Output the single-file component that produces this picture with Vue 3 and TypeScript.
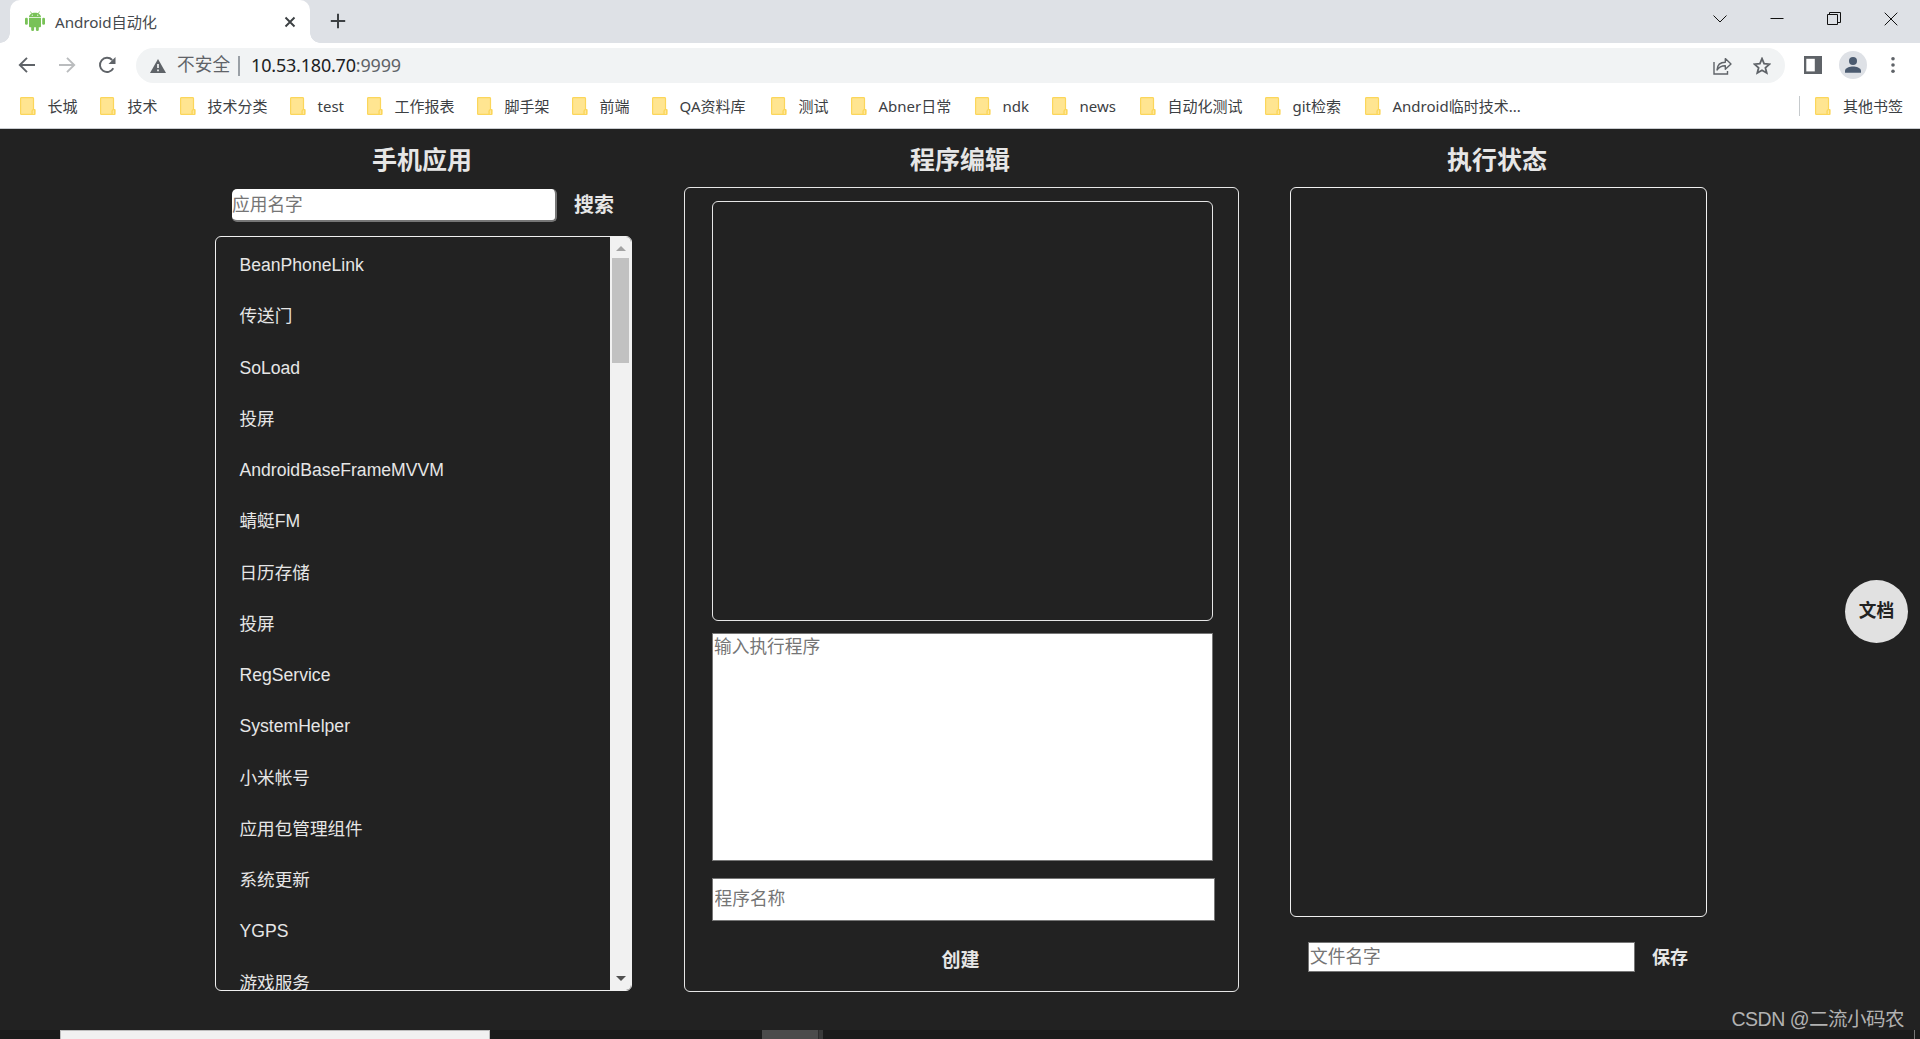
<script setup lang="ts">
interface Bookmark {
  name: string
  width: number
}

const bookmarks: Bookmark[] = [
  { name: '长城', width: 80 },
  { name: '技术', width: 80 },
  { name: '技术分类', width: 110 },
  { name: 'test', width: 77 },
  { name: '工作报表', width: 110 },
  { name: '脚手架', width: 95 },
  { name: '前端', width: 80 },
  { name: 'QA资料库', width: 119 },
  { name: '测试', width: 80 },
  { name: 'Abner日常', width: 124 },
  { name: 'ndk', width: 77 },
  { name: 'news', width: 88 },
  { name: '自动化测试', width: 125 },
  { name: 'git检索', width: 100 },
  { name: 'Android临时技术...', width: 180 },
]

const apps: string[] = [
  'BeanPhoneLink', '传送门', 'SoLoad', '投屏', 'AndroidBaseFrameMVVM',
  '蜻蜓FM', '日历存储', '投屏', 'RegService', 'SystemHelper',
  '小米帐号', '应用包管理组件', '系统更新', 'YGPS', '游戏服务',
]
</script>

<template>
  <div class="screen">
    <div class="tabstrip">
      <div class="tab">
        <svg class="android" width="20" height="20" viewBox="0 0 20 20" fill="#78c257">
          <path d="M4 6.2C4 3.6 6.500 1.700 10 1.700s6 1.900 6 4.500z" />
          <path d="M6.700 2.700L5.500.5M13.300 2.700L14.500.5" stroke="#78c257" stroke-width=".8" />
          <path d="M4 7h12v8.200a1 1 0 0 1-1 1H5a1 1 0 0 1-1-1z" />
          <rect x="0" y="6.800" width="2.800" height="7" rx="1.300" />
          <rect x="17.200" y="6.800" width="2.800" height="7" rx="1.300" />
          <rect x="6.200" y="14" width="2.900" height="6" rx="1.300" />
          <rect x="10.900" y="14" width="2.900" height="6" rx="1.300" />
          <circle cx="7.300" cy="4.200" r=".6" fill="#fff" />
          <circle cx="12.700" cy="4.200" r=".6" fill="#fff" />
        </svg>
        <span class="tab-title">Android自动化</span>
        <svg class="tab-close" width="12" height="12" viewBox="0 0 12 12"><path d="M1.500 1.500l9 9M10.500 1.500l-9 9" stroke="#3c4043" stroke-width="1.900" /></svg>
      </div>
      <svg class="plus" width="16" height="16" viewBox="0 0 16 16"><path d="M8 .8v14.400M.8 8h14.400" stroke="#3c4043" stroke-width="2" /></svg>
      <div class="window-buttons">
        <svg width="14" height="14" viewBox="0 0 14 14"><path d="M.5 3.500L7 10l6.500-6.500" /></svg>
        <svg width="14" height="14" viewBox="0 0 14 14"><path d="M.5 6.500h13" /></svg>
        <svg width="14" height="14" viewBox="0 0 14 14"><path d="M.5 2.500h10v10H.5zM2.500 2.500v-2h11v10h-3" /></svg>
        <svg width="14" height="14" viewBox="0 0 14 14"><path d="M.7.7l12.600 12.600M13.300.7L.7 13.300" /></svg>
      </div>
    </div>

    <div class="toolbar">
      <svg class="nav" width="18" height="18" viewBox="0 0 18 18"><path d="M17 9H2M9 1.800L1.800 9 9 16.200" stroke="#5f6368" /></svg>
      <svg class="nav" width="18" height="18" viewBox="0 0 18 18"><path d="M1 9h15M9 1.800L16.200 9 9 16.200" stroke="#babcbe" /></svg>
      <svg class="nav" width="18" height="18" viewBox="0 0 18 18"><path d="M15.300 12.300A7.100 7.100 0 1 1 14.200 4" stroke="#5f6368" /><path d="M17.500 1v7h-7z" fill="#5f6368" /></svg>
      <div class="omnibox">
        <svg class="warn" width="16" height="14" viewBox="0 0 16 14"><path d="M8 0l8 14H0z" fill="#5f6368" /><path d="M8 5v4M8 10.400v1.800" stroke="#f1f3f4" stroke-width="1.700" /></svg>
        <span class="insecure">不安全</span>
        <span class="omni-divider"></span>
        <span class="url">10.53.180.70<span class="port">:9999</span></span>
        <svg class="share" width="19" height="18" viewBox="0 0 19 18" fill="none" stroke="#5f6368" stroke-width="1.400"><path d="M1 5v12h13.500v-3" /><path d="M4 13c.3-5 3.500-7.800 8.300-7.800V1.600L18 7l-5.700 5.300V8.700C8.500 8.600 6 10 4 13z" stroke-linejoin="round" /></svg>
        <svg class="star" width="18" height="18" viewBox="0 0 18 18"><path d="M9 1.700l2.100 5 5.400.5-4.100 3.500 1.300 5.300L9 13.200 4.300 16l1.300-5.300-4.100-3.500 5.400-.5z" fill="none" stroke="#5f6368" stroke-width="1.800" /></svg>
      </div>
      <svg class="panel-icon" width="18" height="18" viewBox="0 0 18 18"><path d="M0 0h18v18H0z" fill="#5f6368" /><path d="M2.300 2.800h8.500v12.600H2.300z" fill="#fff" /></svg>
      <svg class="avatar" width="28" height="28" viewBox="0 0 28 28"><circle cx="14" cy="14" r="14" fill="#dee1e6" /><circle cx="14" cy="10" r="4" fill="#4b5b70" /><path d="M6 21.700v-1.900c0-2.800 5-4.200 8-4.200s8 1.400 8 4.200v1.900z" fill="#4b5b70" /></svg>
      <svg class="dots" width="4" height="18" viewBox="0 0 4 18" fill="#5f6368"><circle cx="2" cy="2.800" r="1.800" /><circle cx="2" cy="9" r="1.800" /><circle cx="2" cy="15.200" r="1.800" /></svg>
    </div>

    <div class="bookmarks">
      <div v-for="mark in bookmarks" :key="mark.name" class="bookmark" :style="{ width: mark.width + 'px' }">
        <svg class="folder" width="16" height="18" viewBox="0 0 16 18"><path d="M1.500 0h11A1.500 1.500 0 0 1 14 1.500V18H1.500A1.500 1.500 0 0 1 0 16.500v-15A1.500 1.500 0 0 1 1.500 0z" fill="#ffe591" /><path d="M.6 17V1.500q0-.9 1-.9h11q.9 0 .9.900V12M.6 17.400h12" fill="none" stroke="#fbd65b" stroke-width="1.200" /><path d="M12 18q-.6 0-.6-.8v-3q0-1.800 1.800-2.200h1.600q.8.200.8 1v4q0 1-1 1z" fill="#fbd65b" /><path d="M12.800 17v-2.500q0-1.200 1.200-1.400V17z" fill="#ffe79c" /></svg>
        <span>{{ mark.name }}</span>
      </div>
      <div class="other">
        <svg class="folder" width="16" height="18" viewBox="0 0 16 18"><path d="M1.500 0h11A1.500 1.500 0 0 1 14 1.500V18H1.500A1.500 1.500 0 0 1 0 16.500v-15A1.500 1.500 0 0 1 1.500 0z" fill="#ffe591" /><path d="M.6 17V1.500q0-.9 1-.9h11q.9 0 .9.900V12M.6 17.400h12" fill="none" stroke="#fbd65b" stroke-width="1.200" /><path d="M12 18q-.6 0-.6-.8v-3q0-1.800 1.800-2.200h1.600q.8.200.8 1v4q0 1-1 1z" fill="#fbd65b" /><path d="M12.800 17v-2.500q0-1.200 1.200-1.400V17z" fill="#ffe79c" /></svg>
        <span>其他书签</span>
      </div>
    </div>

    <main class="page">
      <section class="column side">
        <h2 class="shift">手机应用</h2>
        <div class="search">
          <input class="search-input" type="text" placeholder="应用名字" />
          <button class="search-button">搜索</button>
        </div>
        <div class="app-list">
          <ul>
            <li v-for="(app, i) in apps" :key="i">{{ app }}</li>
          </ul>
          <div class="scrollbar">
            <span class="arrow up"></span>
            <span class="thumb"></span>
            <span class="arrow down"></span>
          </div>
        </div>
      </section>

      <section class="column editor">
        <h2 class="shift">程序编辑</h2>
        <div class="editor-box">
          <div class="preview"></div>
          <textarea class="program" placeholder="输入执行程序"></textarea>
          <input class="program-name" type="text" placeholder="程序名称" />
          <button class="create">创建</button>
        </div>
      </section>

      <section class="column side">
        <h2 class="shift">执行状态</h2>
        <div class="status"></div>
        <div class="save-row">
          <input class="file-name" type="text" placeholder="文件名字" />
          <button class="save">保存</button>
        </div>
      </section>
    </main>

    <footer class="taskbar">
      <span class="task-search"></span>
      <span class="task-active"></span>
      <span class="task-edge"></span>
      <span class="clock">14:24</span>
      <span class="desktop-edge"></span>
    </footer>

    <div class="doc">文档</div>
    <div class="watermark">CSDN @二流小码农</div>
  </div>
</template>

<style>
body { margin: 0; background: #222; overflow: hidden; }
</style>

<style scoped>
* { box-sizing: border-box; }
.screen {
  position: relative; width: 1920px; height: 1039px; overflow: hidden;
  display: flex; flex-direction: column; background: #222;
  font-family: "Noto Sans", "Noto Sans CJK SC", sans-serif;
}
svg { display: block; flex: none; }
span { white-space: nowrap; }

.tabstrip { height: 43px; flex: none; display: flex; background: #dee1e6; }
.tab {
  position: relative; width: 300px; margin-left: 10px; height: 43px; background: #fff;
  border-radius: 10px 10px 0 0; display: flex; align-items: center;
}
.tab::before, .tab::after { content: ""; position: absolute; bottom: 0; width: 10px; height: 10px; }
.tab::before { left: -10px; background: radial-gradient(circle at 0 0, transparent 9.500px, #fff 10px); }
.tab::after { right: -10px; background: radial-gradient(circle at 100% 0, transparent 9.500px, #fff 10px); }
.android { margin: -1px 0 0 15px; }
.tab-title { width: 220px; margin-left: 10px; margin-top: -1px; font-size: 15.200px; letter-spacing: -.05px; color: #45494d; }
.tab-close { margin-left: 9px; }
.plus { margin: 13px 0 0 20px; }
.window-buttons { margin: 12px 22px 0 auto; display: flex; gap: 43px; }
.window-buttons svg { fill: none; stroke: #111; stroke-width: 1; }

.toolbar { height: 45px; flex: none; display: flex; align-items: center; padding: 0 0 1px 18px; background: #fff; }
.nav { margin-right: 22px; fill: none; stroke-width: 1.900; }
.omnibox {
  width: 1649px; height: 35px; margin-left: -2px; margin-top: 1px; border-radius: 18px; background: #f1f3f4;
  display: flex; align-items: center; font-size: 18px;
}
.warn { margin-left: 14px; }
.insecure { margin-left: 11px; margin-top: -2px; color: #5f6368; font-size: 17.700px; line-height: 35px; }
.omni-divider { width: 2px; height: 20px; margin-left: 8px; background: #9aa0a6; }
.url { margin-left: 11px; margin-top: -2px; color: #202124; letter-spacing: -.2px; }
.port { color: #5f6368; }
.share { margin-left: auto; }
.star { margin: 0 14px 0 21px; }
.panel-icon { margin-left: 19px; }
.avatar { margin-left: 17px; }
.dots { margin-left: 24px; }

.bookmarks {
  height: 41px; flex: none; display: flex; align-items: center; background: #fff;
  border-bottom: 1px solid #c9ccd0; padding: 0 0 4px 20px; font-size: 15px; color: #3c4043;
}
.bookmark { display: flex; align-items: center; flex: none; height: 20px; }
.bookmark span, .other span { margin-top: -1px; }
.folder { margin-right: 11.500px; }
.other {
  display: flex; align-items: center; margin-left: auto; margin-right: 17px;
  border-left: 1px solid #c6cacd; height: 20px; padding-left: 15px;
}

.page { height: 901px; flex: none; display: flex; padding-left: 215px; color: #e6e6e6; font-family: "Liberation Sans", "Noto Sans CJK SC", sans-serif; }
.column { display: flex; flex-direction: column; }
.side { width: 417px; }
.editor { width: 555px; margin: 0 51px 0 52px; }
h2 { margin: 0; height: 58px; line-height: 62px; font-size: 25px; font-weight: 700; text-align: center; }
.shift { padding-right: 3px; }
input, textarea {
  display: block; margin: 0; border: 1px solid #767676; border-radius: 0; background: #fff;
  font: 17.700px "Liberation Sans", "Noto Sans CJK SC", sans-serif; resize: none; outline: none;
}
input::placeholder, textarea::placeholder { color: #757575; opacity: 1; }
button {
  margin: 0; padding: 0; border: 0; background: none; color: #e6e6e6; font-weight: 700;
  font-family: "Liberation Sans", "Noto Sans CJK SC", sans-serif;
}
.search { display: flex; height: 49px; align-items: flex-start; padding: 2px 0 0 17px; }
.search-input { width: 325px; height: 33px; border: 0 solid #767676; border-width: 0 2px 2px 0; border-radius: 5px; padding: 1px 0 0; }
.search-button { width: 42px; height: 29px; margin-left: 16px; font-size: 20px; }
.app-list { height: 755px; border: 1px solid #f0f0f0; border-radius: 6px; display: flex; overflow: hidden; }
ul { flex: 1; list-style: none; margin: 0; padding: 3px 0 0 23.500px; }
li { height: 51.270px; line-height: 51.270px; font-size: 17.600px; white-space: nowrap; }
.scrollbar { width: 21px; background: #f1f1f1; display: flex; flex-direction: column; align-items: center; }
.arrow { width: 0; height: 0; border: 5px solid transparent; }
.up { margin-top: 4px; border-bottom-color: #a3a3a3; }
.thumb { width: 17px; height: 105px; margin-top: 7px; background: #c1c1c1; }
.down { margin-top: auto; margin-bottom: 4px; border-top-color: #505050; }

.editor-box { height: 805px; border: 1px solid #e6e6e6; border-radius: 6px; padding: 13px 0 0 27px; }
.preview { width: 501px; height: 420px; border: 1px solid #e6e6e6; border-radius: 6px; }
.program { width: 501px; height: 228px; margin-top: 12px; padding: 0 1px; line-height: 26px; }
.program-name { width: 503px; height: 43px; margin-top: 17px; padding: 0 1.500px; }
.create { display: block; width: 39px; height: 30px; margin: 22px 0 0 229px; font-size: 19px; }

.status { height: 730px; border: 1px solid #f0f0f0; border-radius: 6px; }
.save-row { display: flex; margin: 25px 0 0 18px; }
.file-name { width: 327px; height: 30px; padding: 0 1px; }
.save { width: 38px; height: 28px; margin-left: 16px; font-size: 18px; }

.taskbar { height: 9px; flex: none; display: flex; overflow: hidden; background: #1b1b1b; }
.task-search { width: 430px; margin-left: 60px; background: #f1f1f1; border: 1px solid #bdbdbd; border-bottom: 0; }
.task-active { width: 56px; margin-left: 272px; background: #4b4b4b; }
.task-edge { width: 5px; background: #393939; border-left: 1px solid #2c2c2c; }
.clock { width: 38px; margin: 5px 0 0 966px; font: 15px/16px "Noto Sans", sans-serif; color: #fff; }
.desktop-edge { width: 1px; margin-left: 87px; background: #777; }

.doc {
  position: absolute; left: 1845px; top: 580px; width: 63px; height: 63px; border-radius: 50%;
  background: #e1e1e1; color: #222; text-align: center; font: 700 17.700px/62px "Liberation Sans", "Noto Sans CJK SC", sans-serif;
}
.watermark { position: absolute; right: 16px; top: 1004px; font: 19.500px/31px "Liberation Sans", "Noto Sans CJK SC", sans-serif; letter-spacing: -.5px; color: #b2b2b2; white-space: nowrap; }
</style>
